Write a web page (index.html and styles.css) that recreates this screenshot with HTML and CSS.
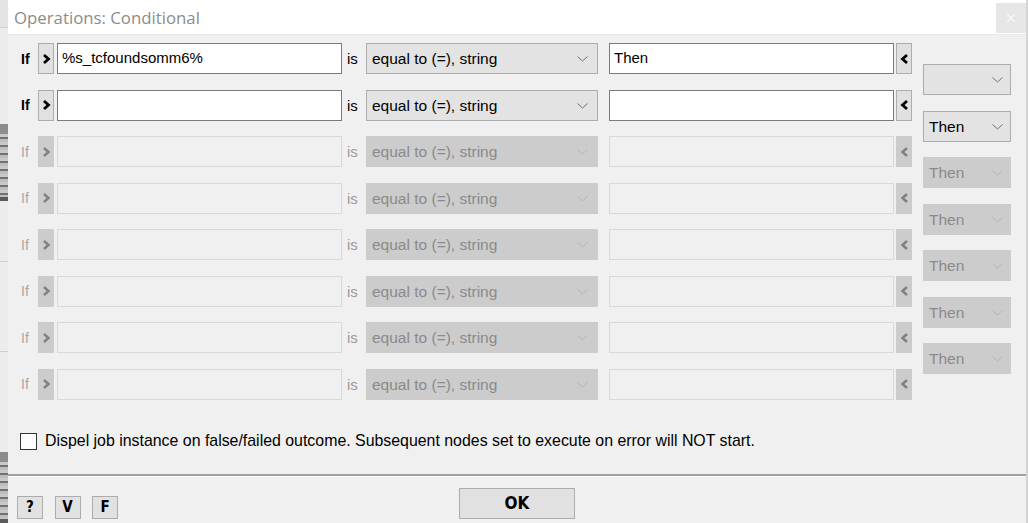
FILE: index.html
```html
<!DOCTYPE html>
<html>
<head>
<meta charset="utf-8">
<link rel="stylesheet" href="styles.css">
</head>
<body>
<div class="screen">
  <div class="strip">
    <div class="strip-top"></div>
    <div class="strip-line"></div>
    <div class="strip-gap a"></div>
    <div class="strip-win"></div>
    <div class="strip-gap b"></div>
    <div class="strip-line"></div>
    <div class="strip-gap c"></div>
    <div class="strip-line"></div>
    <div class="strip-gap d"></div>
    <div class="strip-win tall"></div>
  </div>
  <div class="dialog">
    <div class="titlebar">
      <span class="title">Operations: Conditional</span>
      <div class="close"><svg width="10" height="10" viewBox="0 0 10 10"><path d="M1 1L9 9M9 1L1 9" stroke="#f7f7f7" stroke-width="1.2"/></svg></div>
    </div>
    <div class="content">
      <div class="conditions">
        <div class="rows">
          <div class="row">
            <span class="if">If</span>
            <div class="btn-arrow"><svg width="9" height="12" viewBox="0 0 9 12"><path d="M2 2L6.5 6L2 10" fill="none" stroke="#000" stroke-width="2.8"/></svg></div>
            <div class="field">%s_tcfoundsomm6%</div>
            <span class="is">is</span>
            <div class="select">equal to (=), string<svg class="chev" width="11" height="6" viewBox="0 0 11 6"><path d="M0.5 0.5L5.5 5L10.5 0.5" fill="none" stroke="#707070" stroke-width="1"/></svg></div>
            <div class="field then">Then</div>
            <div class="btn-arrow back"><svg width="9" height="12" viewBox="0 0 9 12"><path d="M7 2L2.5 6L7 10" fill="none" stroke="#000" stroke-width="2.8"/></svg></div>
          </div>
          <div class="row">
            <span class="if">If</span>
            <div class="btn-arrow"><svg width="9" height="12" viewBox="0 0 9 12"><path d="M2 2L6.5 6L2 10" fill="none" stroke="#000" stroke-width="2.8"/></svg></div>
            <div class="field"></div>
            <span class="is">is</span>
            <div class="select">equal to (=), string<svg class="chev" width="11" height="6" viewBox="0 0 11 6"><path d="M0.5 0.5L5.5 5L10.5 0.5" fill="none" stroke="#707070" stroke-width="1"/></svg></div>
            <div class="field then"></div>
            <div class="btn-arrow back"><svg width="9" height="12" viewBox="0 0 9 12"><path d="M7 2L2.5 6L7 10" fill="none" stroke="#000" stroke-width="2.8"/></svg></div>
          </div>
          <div class="row disabled">
            <span class="if">If</span>
            <div class="btn-arrow"><svg width="9" height="12" viewBox="0 0 9 12"><path d="M2 2L6.5 6L2 10" fill="none" stroke="#808080" stroke-width="2.4"/></svg></div>
            <div class="field"></div>
            <span class="is">is</span>
            <div class="select">equal to (=), string<svg class="chev" width="11" height="6" viewBox="0 0 11 6"><path d="M0.5 0.5L5.5 5L10.5 0.5" fill="none" stroke="#b4b4b4" stroke-width="1"/></svg></div>
            <div class="field then"></div>
            <div class="btn-arrow back"><svg width="9" height="12" viewBox="0 0 9 12"><path d="M7 2L2.5 6L7 10" fill="none" stroke="#808080" stroke-width="2.4"/></svg></div>
          </div>
          <div class="row disabled">
            <span class="if">If</span>
            <div class="btn-arrow"><svg width="9" height="12" viewBox="0 0 9 12"><path d="M2 2L6.5 6L2 10" fill="none" stroke="#808080" stroke-width="2.4"/></svg></div>
            <div class="field"></div>
            <span class="is">is</span>
            <div class="select">equal to (=), string<svg class="chev" width="11" height="6" viewBox="0 0 11 6"><path d="M0.5 0.5L5.5 5L10.5 0.5" fill="none" stroke="#b4b4b4" stroke-width="1"/></svg></div>
            <div class="field then"></div>
            <div class="btn-arrow back"><svg width="9" height="12" viewBox="0 0 9 12"><path d="M7 2L2.5 6L7 10" fill="none" stroke="#808080" stroke-width="2.4"/></svg></div>
          </div>
          <div class="row disabled">
            <span class="if">If</span>
            <div class="btn-arrow"><svg width="9" height="12" viewBox="0 0 9 12"><path d="M2 2L6.5 6L2 10" fill="none" stroke="#808080" stroke-width="2.4"/></svg></div>
            <div class="field"></div>
            <span class="is">is</span>
            <div class="select">equal to (=), string<svg class="chev" width="11" height="6" viewBox="0 0 11 6"><path d="M0.5 0.5L5.5 5L10.5 0.5" fill="none" stroke="#b4b4b4" stroke-width="1"/></svg></div>
            <div class="field then"></div>
            <div class="btn-arrow back"><svg width="9" height="12" viewBox="0 0 9 12"><path d="M7 2L2.5 6L7 10" fill="none" stroke="#808080" stroke-width="2.4"/></svg></div>
          </div>
          <div class="row disabled">
            <span class="if">If</span>
            <div class="btn-arrow"><svg width="9" height="12" viewBox="0 0 9 12"><path d="M2 2L6.5 6L2 10" fill="none" stroke="#808080" stroke-width="2.4"/></svg></div>
            <div class="field"></div>
            <span class="is">is</span>
            <div class="select">equal to (=), string<svg class="chev" width="11" height="6" viewBox="0 0 11 6"><path d="M0.5 0.5L5.5 5L10.5 0.5" fill="none" stroke="#b4b4b4" stroke-width="1"/></svg></div>
            <div class="field then"></div>
            <div class="btn-arrow back"><svg width="9" height="12" viewBox="0 0 9 12"><path d="M7 2L2.5 6L7 10" fill="none" stroke="#808080" stroke-width="2.4"/></svg></div>
          </div>
          <div class="row disabled">
            <span class="if">If</span>
            <div class="btn-arrow"><svg width="9" height="12" viewBox="0 0 9 12"><path d="M2 2L6.5 6L2 10" fill="none" stroke="#808080" stroke-width="2.4"/></svg></div>
            <div class="field"></div>
            <span class="is">is</span>
            <div class="select">equal to (=), string<svg class="chev" width="11" height="6" viewBox="0 0 11 6"><path d="M0.5 0.5L5.5 5L10.5 0.5" fill="none" stroke="#b4b4b4" stroke-width="1"/></svg></div>
            <div class="field then"></div>
            <div class="btn-arrow back"><svg width="9" height="12" viewBox="0 0 9 12"><path d="M7 2L2.5 6L7 10" fill="none" stroke="#808080" stroke-width="2.4"/></svg></div>
          </div>
          <div class="row disabled">
            <span class="if">If</span>
            <div class="btn-arrow"><svg width="9" height="12" viewBox="0 0 9 12"><path d="M2 2L6.5 6L2 10" fill="none" stroke="#808080" stroke-width="2.4"/></svg></div>
            <div class="field"></div>
            <span class="is">is</span>
            <div class="select">equal to (=), string<svg class="chev" width="11" height="6" viewBox="0 0 11 6"><path d="M0.5 0.5L5.5 5L10.5 0.5" fill="none" stroke="#b4b4b4" stroke-width="1"/></svg></div>
            <div class="field then"></div>
            <div class="btn-arrow back"><svg width="9" height="12" viewBox="0 0 9 12"><path d="M7 2L2.5 6L7 10" fill="none" stroke="#808080" stroke-width="2.4"/></svg></div>
          </div>
        </div>
        <div class="joins">
          <div class="join"><span></span><svg class="chev" width="11" height="6" viewBox="0 0 11 6"><path d="M0.5 0.5L5.5 5L10.5 0.5" fill="none" stroke="#707070" stroke-width="1"/></svg></div>
          <div class="join"><span>Then</span><svg class="chev" width="11" height="6" viewBox="0 0 11 6"><path d="M0.5 0.5L5.5 5L10.5 0.5" fill="none" stroke="#707070" stroke-width="1"/></svg></div>
          <div class="join disabled"><span>Then</span><svg class="chev" width="11" height="6" viewBox="0 0 11 6"><path d="M0.5 0.5L5.5 5L10.5 0.5" fill="none" stroke="#b4b4b4" stroke-width="1"/></svg></div>
          <div class="join disabled"><span>Then</span><svg class="chev" width="11" height="6" viewBox="0 0 11 6"><path d="M0.5 0.5L5.5 5L10.5 0.5" fill="none" stroke="#b4b4b4" stroke-width="1"/></svg></div>
          <div class="join disabled"><span>Then</span><svg class="chev" width="11" height="6" viewBox="0 0 11 6"><path d="M0.5 0.5L5.5 5L10.5 0.5" fill="none" stroke="#b4b4b4" stroke-width="1"/></svg></div>
          <div class="join disabled"><span>Then</span><svg class="chev" width="11" height="6" viewBox="0 0 11 6"><path d="M0.5 0.5L5.5 5L10.5 0.5" fill="none" stroke="#b4b4b4" stroke-width="1"/></svg></div>
          <div class="join disabled"><span>Then</span><svg class="chev" width="11" height="6" viewBox="0 0 11 6"><path d="M0.5 0.5L5.5 5L10.5 0.5" fill="none" stroke="#b4b4b4" stroke-width="1"/></svg></div>
        </div>
      </div>
      <div class="check-row">
        <span class="checkbox"></span>
        <span class="check-label">Dispel job instance on false/failed outcome. Subsequent nodes set to execute on error will NOT start.</span>
      </div>
    </div>
    <div class="separator"></div>
    <div class="footer">
      <div class="tools">
        <div class="tool">?</div>
        <div class="tool">V</div>
        <div class="tool">F</div>
      </div>
      <div class="ok">OK</div>
      <div></div>
    </div>
  </div>
</div>
</body>
</html>
```
FILE: styles.css
```css
* { box-sizing: border-box; }
html, body {
  margin: 0;
  padding: 0;
  width: 1028px;
  height: 523px;
  overflow: hidden;
  background: #f0f0f0;
  font-family: "Liberation Sans", Arial, sans-serif;
}
.screen {
  display: flex;
  width: 1028px;
  height: 523px;
}
.strip {
  width: 8px;
  flex: none;
  display: flex;
  flex-direction: column;
  background: #ececec;
}
.strip-top { height: 35px; background: #e4e4e4; }
.strip-line { height: 1px; background: #cfcfcf; }
.strip-gap { flex: none; }
.strip-gap.a { height: 96px; }
.strip-gap.b { height: 60px; }
.strip-gap.c { height: 90px; }
.strip-gap.d { height: 100px; }
.strip-win {
  height: 96px;
  background: repeating-linear-gradient(180deg, #c8c8c8 0 3px, #707070 3px 5px, #bdbdbd 5px 8px);
  border-top: 10px solid #8c8c8c;
  border-bottom: 4px solid #5a5a5a;
}
.strip-win.tall { height: 88px; }
.dialog {
  flex: 1;
  display: flex;
  flex-direction: column;
  background: #f0f0f0;
  border-right: 2px solid #d4d4d4;
}
.titlebar {
  height: 35px;
  flex: none;
  background: #fff;
  display: flex;
  align-items: center;
  justify-content: space-between;
  border-bottom: 1px solid #e8e8e8;
}
.title {
  padding-left: 6px;
  font-family: "Open Sans", "Noto Sans", sans-serif;
  font-size: 16.8px;
  color: #8c8c8c;
}
.close {
  width: 30px;
  height: 30px;
  margin-top: 1px;
  background: #e6e6e6;
  display: flex;
  align-items: center;
  justify-content: center;
}
.content {
  padding: 8px 0 0 10px;
}
.conditions {
  display: flex;
  align-items: flex-start;
}
.rows {
  display: flex;
  flex-direction: column;
  gap: 15.5px;
}
.row {
  display: flex;
  align-items: center;
  height: 31px;
  font-size: 15px;
  color: #000;
}
.if {
  width: 20px;
  padding-left: 3px;
  font-weight: bold;
  font-size: 14px;
}
.btn-arrow {
  width: 16px;
  height: 31px;
  margin-right: 3px;
  background: #e1e1e1;
  border: 1px solid #adadad;
  display: flex;
  align-items: center;
  justify-content: center;
}
.btn-arrow.back { margin: 0 0 0 2px; }
.field {
  width: 285px;
  height: 31px;
  background: #fff;
  border: 1px solid #7a7a7a;
  padding: 5px 0 0 4px;
  white-space: nowrap;
  overflow: hidden;
}
.field.then { margin-left: 11px; }
.is {
  width: 24px;
  padding-left: 5px;
}
.select {
  position: relative;
  width: 232px;
  height: 31px;
  background: #e3e3e3;
  border: 1px solid #adadad;
  padding: 6px 0 0 5px;
  font-size: 15.5px;
  white-space: nowrap;
}
.chev {
  position: absolute;
  right: 9px;
  top: 12px;
}
.row.disabled { color: #9a9a9a; }
.row.disabled .if { font-weight: normal; color: #a8a8a8; }
.row.disabled .btn-arrow { background: #cccccc; border-color: #cccccc; }
.row.disabled .field { background: #f0f0f0; border-color: #d9d9d9; }
.row.disabled .select { background: #cccccc; border-color: #cccccc; color: #8a8a8a; }
.joins {
  margin-left: 11px;
  padding-top: 21px;
  display: flex;
  flex-direction: column;
  gap: 15.5px;
}
.join {
  position: relative;
  width: 88px;
  height: 31px;
  background: #e3e3e3;
  border: 1px solid #adadad;
  padding: 6px 0 0 5px;
  font-size: 15.5px;
  color: #000;
}
.join .chev { right: 7px; }
.join.disabled { background: #cccccc; border-color: #cccccc; color: #8a8a8a; }
.check-row {
  display: flex;
  align-items: center;
  margin-top: 33px;
  height: 17px;
}
.checkbox {
  width: 17px;
  height: 17px;
  margin-left: 2px;
  background: #fff;
  border: 1px solid #333;
}
.check-label {
  margin-left: 8px;
  font-size: 15.9px;
  color: #000;
}
.separator {
  margin-top: 24px;
  height: 3px;
  border-top: 2px solid #a0a0a0;
  border-bottom: 1px solid #fafafa;
}
.footer {
  display: grid;
  grid-template-columns: 1fr auto 1fr;
  align-items: end;
  padding-top: 11px;
}
.tools {
  display: flex;
  gap: 11.5px;
  padding-left: 9px;
}
.tool, .ok {
  background: #e1e1e1;
  border: 1px solid #adadad;
  font-family: "Liberation Sans Narrow", "DejaVu Sans Condensed", sans-serif;
  font-weight: bold;
  display: flex;
  align-items: center;
  justify-content: center;
  color: #000;
}
.tool {
  width: 26px;
  height: 23px;
  font-size: 15px;
}
.ok {
  width: 116px;
  height: 31px;
  font-size: 17px;
}
```
